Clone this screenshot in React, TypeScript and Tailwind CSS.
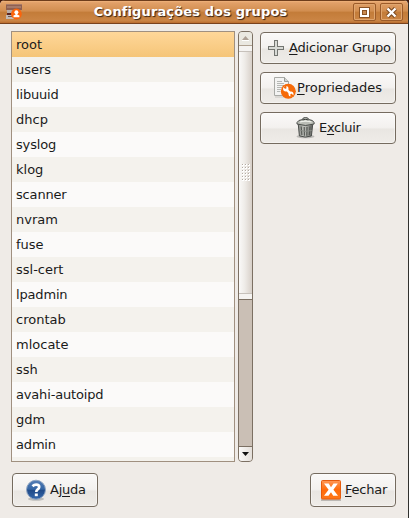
import type { ReactNode } from 'react';

const groups = [
  'root', 'users', 'libuuid', 'dhcp', 'syslog', 'klog', 'scanner', 'nvram', 'fuse',
  'ssl-cert', 'lpadmin', 'crontab', 'mlocate', 'ssh', 'avahi-autoipd', 'gdm', 'admin',
];

// Names whose glyphs sit a little closer together in the list.
const tightNames = ['libuuid', 'scanner', 'syslog', 'avahi-autoipd', 'lpadmin', 'admin'];

function UsersIcon() {
  return (
    <svg className="h-4 w-4" viewBox="0 0 16 16">
      <path d="M0 0h16v6H0z" fill="#8f5f50" />
      <path d="M0 0h16v1H0z" fill="#a87b69" />
      <path d="M1 2h14v2H1z" fill="#a5796a" />
      <path d="M1 6h13v3H1z" fill="#b8aca6" />
      <path d="M1 9h6v2H1z" fill="#5b2420" />
      <path d="M0 11h8v4H0z" fill="#c2bab6" />
      <path d="M2 12h4v1H2z" fill="#715b50" />
      <circle cx="10.4" cy="10" r="5.4" fill="#fb640c" />
      <circle cx="10.4" cy="8.2" r="2" fill="#fff" />
      <path d="M9.4 9.4h2v1.3l2 .8v1.8H7.5v-1.8l1.9-.8z" fill="#fff" />
    </svg>
  );
}

function PlusIcon() {
  return (
    <svg className="h-4 w-4" viewBox="0 0 16 16" shapeRendering="crispEdges">
      <path d="M6.5.5h3v6h6v3h-6v6h-3v-6h-6v-3h6z" fill="#d8dad6" stroke="#737571" />
    </svg>
  );
}

function PropertiesIcon() {
  return (
    <svg className="h-[22px] w-[22px]" viewBox="0 0 22 22">
      <path d="M.5 18.5V.5h10l4 4v14z" fill="#f3f3f2" stroke="#a9aaa6" />
      <path d="M10.5.5v4h4" fill="#d2d3d0" stroke="#999b96" />
      <path d="M3 4.5h5M3 6.5h7M3 8.5h8M3 10.5h5M3 12.5h4M3 14.5h3" stroke="#b5b7b4" />
      <path d="M1 20h10" stroke="#c8c5c1" />
      <circle cx="14.3" cy="14.2" r="7.5" fill="#f66a08" />
      <path d="M12 12l4.8 4.8" stroke="#fff" strokeWidth="2.4" />
      <circle cx="11.8" cy="11.7" r="2.7" fill="#fff" />
      <circle cx="17" cy="17" r="2.5" fill="#fff" />
      <path d="M11.7 11.5V7.8M11.7 11.5l-2.8-2.8M17.1 17.1v3.5M17.1 17.1l2.3 2.3" stroke="#f66a08" strokeWidth="1.4" />
    </svg>
  );
}

function TrashIcon() {
  return (
    <svg className="h-[22px] w-5" viewBox="0 0 20 22">
      <defs>
        <linearGradient id="can" x1="0" x2="1">
          <stop stopColor="#898b87" />
          <stop offset=".4" stopColor="#c3c5bf" />
          <stop offset="1" stopColor="#5c5e5b" />
        </linearGradient>
      </defs>
      <ellipse cx="9.5" cy="19.5" rx="9" ry="1.7" fill="#bbb9b6" />
      <path d="M2.2 6.5l1.2 12.4q6 2.4 12 0L16.8 6.5z" fill="url(#can)" stroke="#4b4e4b" />
      <path d="M5.2 9.5l.7 8.5M8.2 10l.2 8.8M11 10l-.2 8.8M14 9.5l-.7 8.5" stroke="#555854" strokeWidth="1.2" />
      <path d="M3.7 13.5q6 1.7 12 0" fill="none" stroke="#8a8d87" />
      <path d="M1 5.5Q2 3 6.5 2.5q0-2 3-2t3.2 2q4.8.6 5.4 3V7Q9.5 10 1 7z" fill="#b9bcb5" stroke="#4a4d4a" />
      <path d="M4 5q5.5-2 11.5 0" fill="none" stroke="#eef0ea" strokeWidth="1.3" />
      <path d="M6.5 3q3-1.3 6 0" fill="none" stroke="#343734" />
    </svg>
  );
}

function HelpIcon() {
  return (
    <svg className="h-[22px] w-[22px]" viewBox="0 0 22 22">
      <defs>
        <linearGradient id="help" x2="0" y2="1">
          <stop stopColor="#567fb6" />
          <stop offset=".48" stopColor="#3465a4" />
          <stop offset=".52" stopColor="#204a87" />
          <stop offset="1" stopColor="#3467ac" />
        </linearGradient>
      </defs>
      <ellipse cx="11" cy="20" rx="8" ry="1.8" fill="#bdbdbb" />
      <circle cx="11" cy="10.7" r="9.5" fill="url(#help)" stroke="#8fa5c2" />
      <path d="M7.5 7.3q1.6-1.6 3.7-1.6 3 0 3 2.3 0 1.5-1.7 2.5-1.2.8-1.2 2.4" fill="none" stroke="#fff" strokeWidth="2.7" />
      <rect x="9.8" y="14.5" width="3" height="2.7" fill="#fff" />
    </svg>
  );
}

function CloseIcon() {
  return (
    <svg className="h-[22px] w-[22px]" viewBox="0 0 22 22">
      <defs>
        <linearGradient id="close" x2="0" y2="1">
          <stop stopColor="#ff9857" />
          <stop offset=".5" stopColor="#ff6b0b" />
          <stop offset="1" stopColor="#ff7818" />
        </linearGradient>
      </defs>
      <path d="M1 21h20" stroke="#bbb8b4" strokeWidth="2" />
      <rect x="1.5" y="1.5" width="19" height="18.5" rx="1" fill="url(#close)" stroke="#e65b0c" />
      <path d="M4 4.5h4.7L11 8.2l2.5-3.7h4.3l-4.4 6.2 4.6 6h-4.8L11 13.2l-2.5 3.5H4l4.6-6z" fill="#fff" />
    </svg>
  );
}

function Button({ className, children }: { className: string; children: ReactNode }) {
  return (
    <button
      className={`flex items-center rounded-[4px] border border-[#756b5f] bg-[linear-gradient(#faf9f8,#f3f1ef_48%,#e9e6e2_54%,#efece8)] whitespace-nowrap shadow-[inset_0_0_0_1px_#ffffff66] ${className}`}
    >
      {children}
    </button>
  );
}

function Mnemonic({ children }: { children: string }) {
  return <span className="underline decoration-1 underline-offset-2">{children}</span>;
}

export default function App() {
  return (
    <div className="h-[518px] w-[409px] overflow-hidden bg-[#431708] font-['DejaVu_Sans',sans-serif] text-[13px] text-[#1a1a1a]">
      <div className="flex h-full flex-col overflow-hidden rounded-t-[5px] border-r border-[#30302e] bg-[#efebe7]">
        <header className="flex h-6 shrink-0 items-center border-t border-b border-t-[#6e3d1b] border-b-[#79421d] bg-[linear-gradient(#f0b37c,#e1a068_8%,#d28e50_45%,#c37c39_52%,#cb8545_90%,#b96c2d)] pr-[5px] pl-[6px]">
          <UsersIcon />
          <h1 className="flex-1 pl-[6px] text-center text-[13px] leading-5 font-bold tracking-[0.12px] text-white [text-shadow:1px_1px_1px_#332015]">
            Configurações dos grupos
          </h1>
          <div className="flex gap-[4px]">
            <span className="flex h-[18px] w-[23px] items-center justify-center rounded-[2px] border border-[#9c5b29] shadow-[inset_0_0_0_1px_#e0a66f]">
              <svg className="h-[11px] w-[11px]" viewBox="0 0 11 11" shapeRendering="crispEdges">
                <path d="M0 0h11v11H0z" fill="#8a5325" />
                <path d="M1 1h9v9H1z" fill="#fff" />
                <path d="M3 3h5v5H3z" fill="#8a5325" />
                <path d="M4 4h3v3H4z" fill="#c98a50" />
              </svg>
            </span>
            <span className="flex h-[18px] w-[23px] items-center justify-center rounded-[2px] border border-[#9c5b29] shadow-[inset_0_0_0_1px_#e0a66f]">
              <svg className="h-[11px] w-[11px]" viewBox="0 0 11 11">
                <path d="M1.5 1.5l8 8M9.5 1.5l-8 8" stroke="#794820" strokeWidth="4.4" />
                <path d="M1.5 1.5l8 8M9.5 1.5l-8 8" stroke="#fff" strokeWidth="2.4" />
              </svg>
            </span>
          </div>
        </header>

        <main className="flex flex-1 flex-col pt-[7px] pr-3 pb-[11px] pl-[11px]">
          <div className="flex h-[431px]">
            <ul className="w-[224px] border border-[#a09080] bg-[#f4f2ed]">
              {groups.map((group, i) => (
                <li
                  key={group}
                  className={`h-[25px] pl-1 leading-[25px] ${tightNames.includes(group) ? 'tracking-[-0.17px]' : ''} ${
                    i === 0 ? 'bg-[linear-gradient(#ffd799,#f5c578)]' : i % 2 ? 'bg-[#f4f2ed]' : 'bg-[#fbfaf9]'
                  }`}
                >
                  {group}
                </li>
              ))}
            </ul>
            <div className="ml-[3px] flex w-[15px] flex-col overflow-hidden rounded-[4px] border border-[#7c7063] bg-[#cabfb5]">
              <div className="flex h-[14px] shrink-0 items-center justify-center border-b border-[#b0a292] bg-[#eae8e1]">
                <svg className="h-[5px] w-[7px]" viewBox="0 0 7 5">
                  <path d="M3.5 0L7 4H0z" fill="#ada095" />
                  <path d="M0 4.5h7" stroke="#fff" />
                </svg>
              </div>
              <div className="flex h-[254px] shrink-0 flex-col justify-between border-b border-[#7c7063] bg-[linear-gradient(90deg,#faf9f8,#eeebe7_45%,#d8d0c9)]">
                <div className="h-[6px] border-b border-[#c7c1bb] bg-[#f5f3f1]" />
                <svg className="ml-[3px] h-[18px] w-[9px]" viewBox="0 0 9 18" shapeRendering="crispEdges">
                  {[0, 3, 6, 9, 12, 15].flatMap((y) =>
                    [0, 3, 6].map((x) => (
                      <g key={`${x}-${y}`}>
                        <path d={`M${x} ${y}h2v2h-2z`} fill="#fff" />
                        <path d={`M${x} ${y}h1v1h-1z`} fill="#b3aaa2" />
                      </g>
                    )),
                  )}
                </svg>
                <div className="h-[6px] border-t border-[#c7c1bb] bg-[#f5f3f1]" />
              </div>
              <div className="flex-1" />
              <div className="flex h-[15px] items-center justify-center border-t border-[#7c7063] bg-[linear-gradient(90deg,#faf9f8,#e4dfda)]">
                <svg className="h-1 w-[7px]" viewBox="0 0 7 4">
                  <path d="M0 0h7L3.5 4z" fill="#111" />
                </svg>
              </div>
            </div>
            <div className="mt-px ml-[7px] flex w-[136px] flex-col gap-2">
              <Button className="h-8 pl-[7px] tracking-[-0.2px]">
                <PlusIcon />
                <span className="ml-[5px]"><Mnemonic>A</Mnemonic>dicionar Grupo</span>
              </Button>
              <Button className="h-8 pl-[13px]">
                <PropertiesIcon />
                <span className="ml-[1px]"><Mnemonic>P</Mnemonic>ropriedades</span>
              </Button>
              <Button className="h-8 pl-[35px] tracking-[-0.3px]">
                <TrashIcon />
                <span className="ml-[3px]">E<Mnemonic>x</Mnemonic>cluir</span>
              </Button>
            </div>
          </div>
          <footer className="mt-auto flex justify-between pl-px">
            <Button className="h-[34px] w-[86px] pl-[12px] tracking-[-0.25px]">
              <HelpIcon />
              <span className="ml-[3px]">Aj<Mnemonic>u</Mnemonic>da</span>
            </Button>
            <Button className="h-[34px] w-[86px] pl-[9px] tracking-[-0.25px]">
              <CloseIcon />
              <span className="ml-[3px]"><Mnemonic>F</Mnemonic>echar</span>
            </Button>
          </footer>
        </main>
      </div>
    </div>
  );
}
